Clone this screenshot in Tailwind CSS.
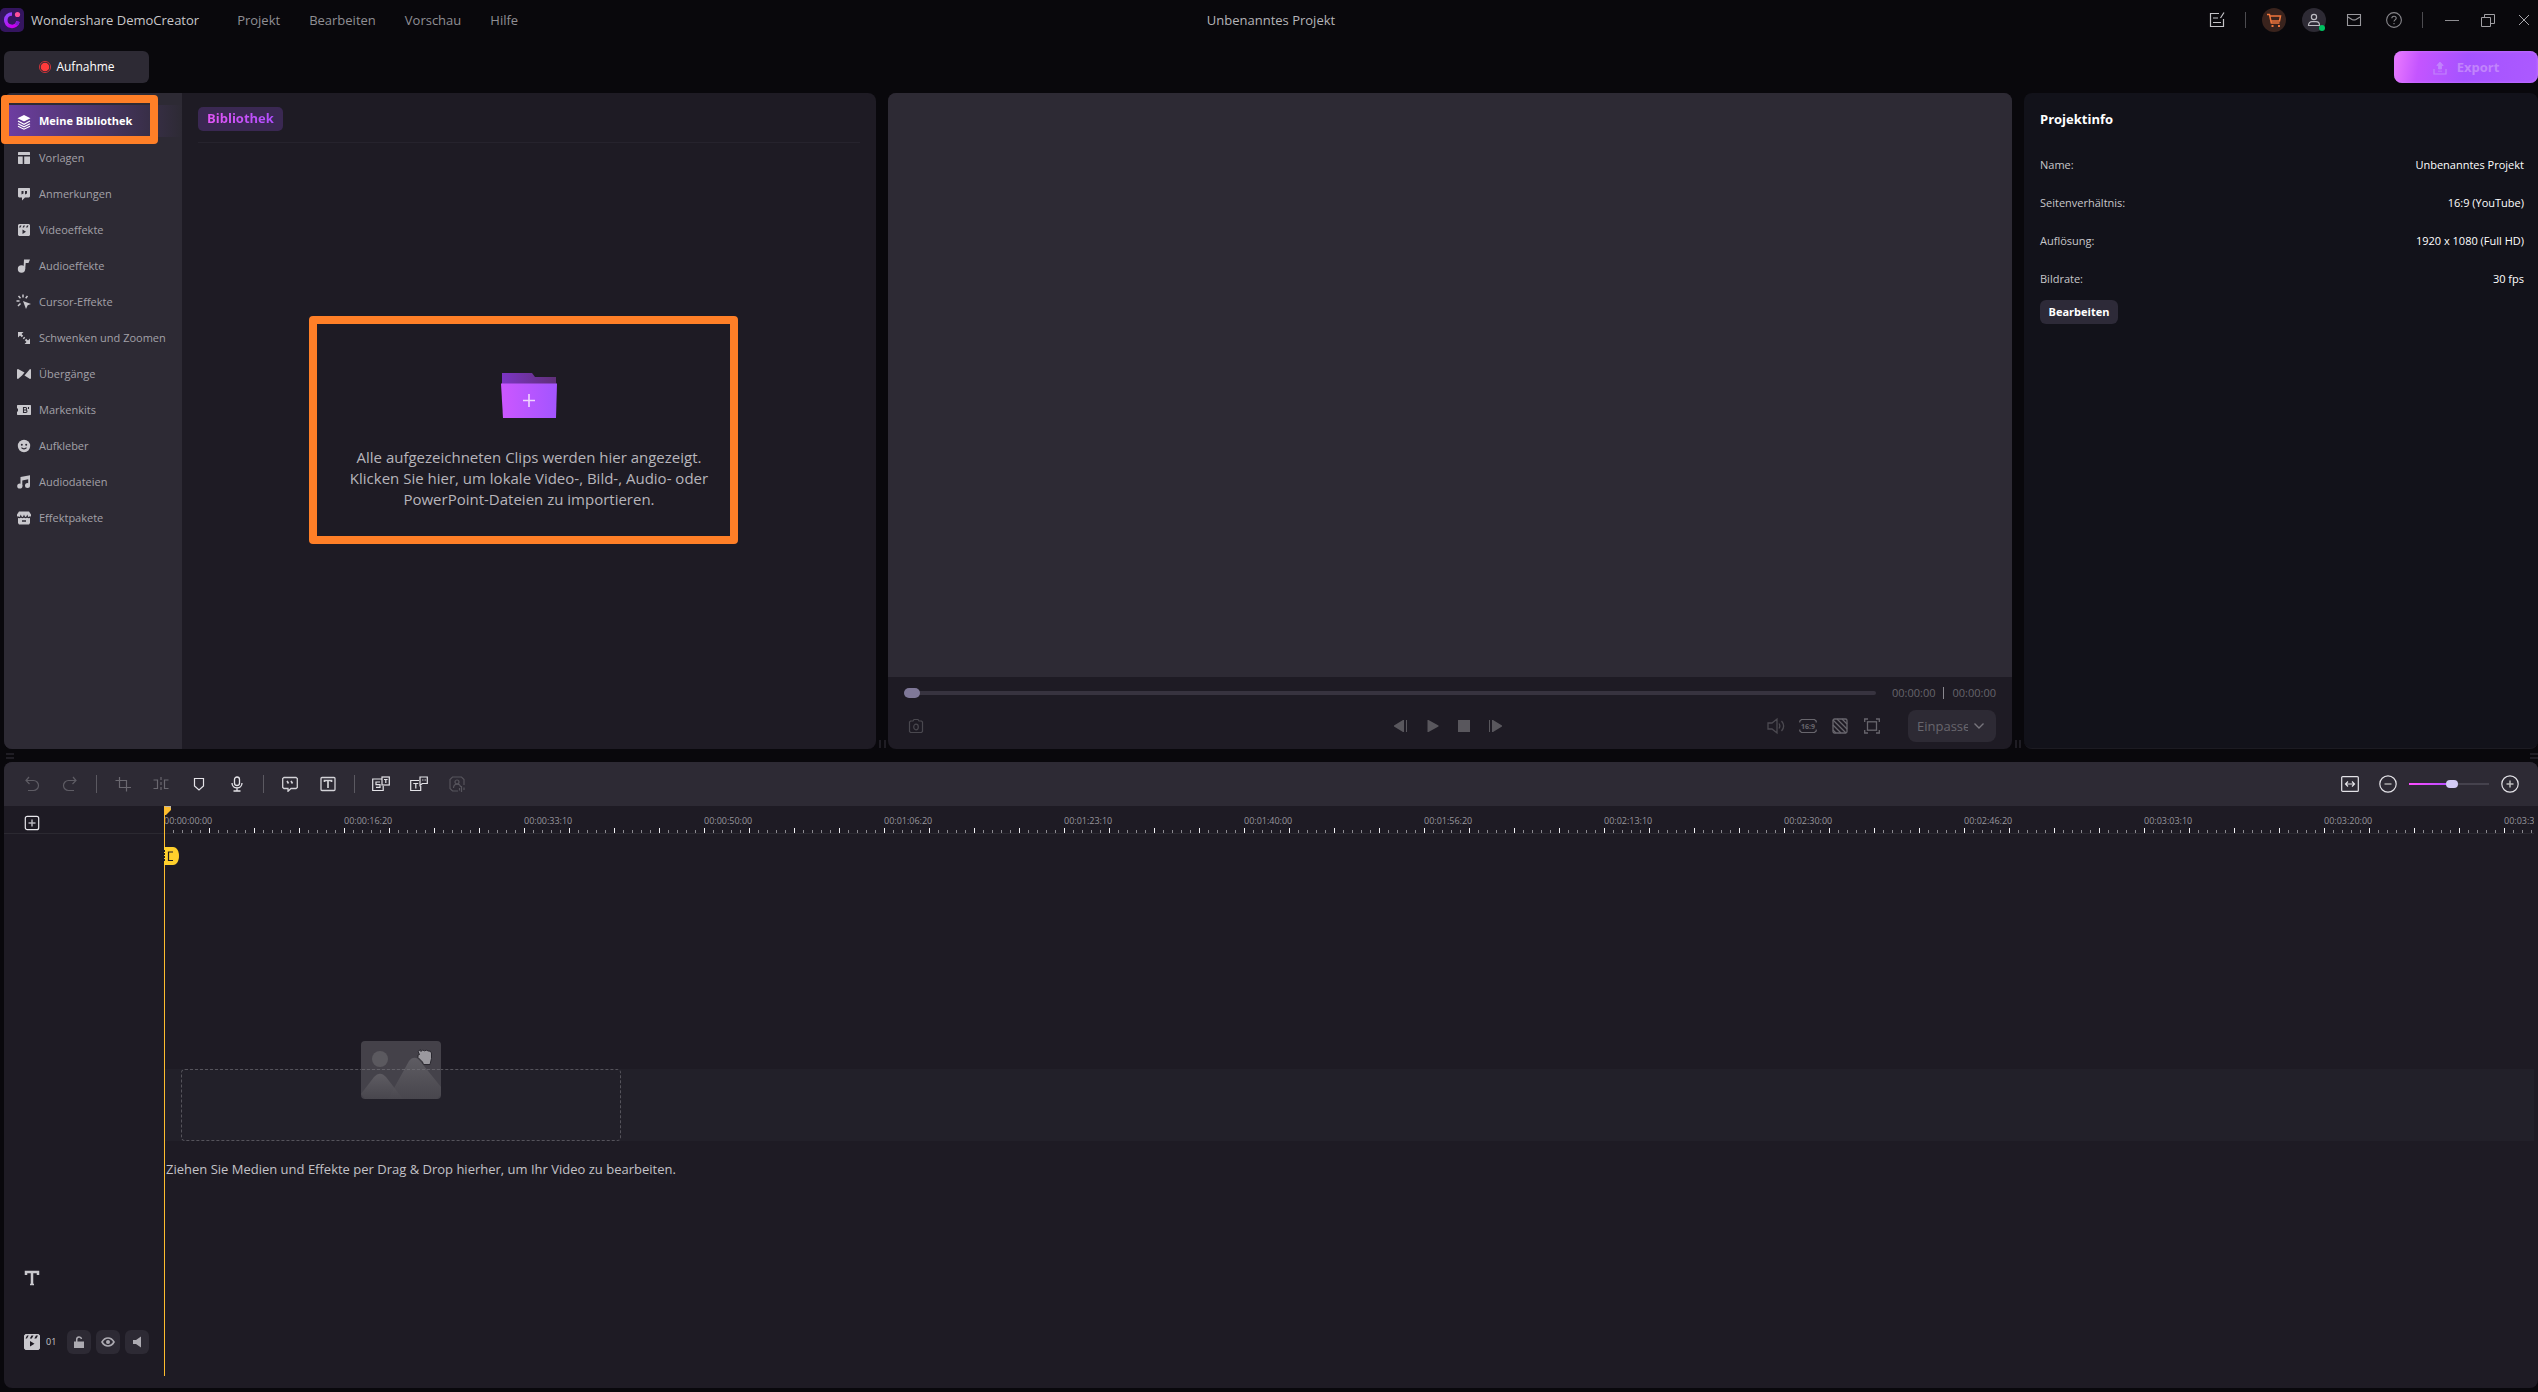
<!DOCTYPE html>
<html lang="de">
<head>
<meta charset="utf-8">
<title>Wondershare DemoCreator</title>
<script src="https://cdn.jsdelivr.net/npm/@tailwindcss/browser@4"></script>
</head>
<body class="flex h-screen min-h-[900px] flex-col overflow-hidden bg-[#09080c] font-['Open_Sans','Noto_Sans',sans-serif] text-[#c8c7ca]">

<!-- Title bar -->
<header class="grid h-10 shrink-0 grid-cols-[1fr_auto_1fr] items-center">
  <div class="flex items-center">
    <svg class="h-6 w-6 shrink-0" viewBox="0 0 24 24">
      <defs><linearGradient id="lg" x1="0" y1="0" x2="0.6" y2="1"><stop offset="0" stop-color="#8a4dff"/><stop offset="1" stop-color="#c800f0"/></linearGradient></defs>
      <rect width="24" height="24" rx="5" fill="#34155f"/>
      <path d="M12 6A6.200 6.200 0 1 0 18 13.500" fill="none" stroke="url(#lg)" stroke-width="3.600"/>
      <path d="M18 13.500L16.500 17" stroke="#7a1fd0" stroke-width="3"/>
      <circle cx="17.500" cy="6.500" r="2.600" fill="#ff4f9a"/>
    </svg>
    <span class="ml-[7px] pt-0.5 text-[13px]">Wondershare DemoCreator</span>
    <nav class="ml-[38px] flex gap-[29px] pt-px text-[13px] text-[#908f94]">
      <a href="#">Projekt</a><a href="#">Bearbeiten</a><a href="#">Vorschau</a><a href="#">Hilfe</a>
    </nav>
  </div>
  <h1 class="pt-0.5 pl-1 text-[13px] text-[#b5b4b8]">Unbenanntes Projekt</h1>
  <div class="flex items-center justify-end">
    <button class="flex w-[38px] justify-center" aria-label="Notizen"><svg class="h-4 w-4" viewBox="0 0 16 16" fill="none" stroke="#c4c3c7" stroke-width="1.200"><path d="M10 1.500H1.500v13h13V7M4 6h5M4 10.500h8M15 .5L11.500 6"/></svg></button>
    <span class="flex w-[18px] justify-center"><i class="h-4 w-px bg-[#4c4b50]"></i></span>
    <button class="flex w-10 justify-center" aria-label="Shop"><svg class="h-6 w-6" viewBox="0 0 24 24" fill="none" stroke="#f0763c" stroke-width="1.500"><circle cx="12" cy="12" r="12" fill="#3a231d" stroke="none"/><path d="M5 6.500h2.500l1.800 8.500h8.200M8 8h10.500l-1 5H9"/><path d="M9.500 18h2M16 18h2" stroke-width="2"/></svg></button>
    <button class="flex w-10 justify-center" aria-label="Konto"><svg class="h-6 w-6" viewBox="0 0 24 24" fill="none" stroke="#bdbcc2" stroke-width="1.200"><circle cx="12" cy="12" r="12" fill="#2d2a34" stroke="none"/><circle cx="12" cy="9" r="2.600"/><path d="M6.500 17.500c0-2.500 1.500-3.800 3.500-3.800h4c2 0 3.500 1.300 3.500 3.800z"/><circle cx="20" cy="20" r="3" fill="#00c261" stroke="none"/></svg></button>
    <button class="flex w-10 justify-center" aria-label="Nachrichten"><svg class="h-4 w-4" viewBox="0 0 16 16" fill="none" stroke="#99989d" stroke-width="1.100"><path d="M1.500 2.500h13v11h-13zM2 5l4 2.500c1.300.6 2.700.6 4 0L14 5"/></svg></button>
    <button class="flex w-10 justify-center" aria-label="Hilfe"><svg class="h-4 w-4" viewBox="0 0 16 16" fill="none" stroke="#88878c" stroke-width="1.100"><circle cx="8" cy="8" r="7.400"/><path d="M5.800 6.300c0-1.300 1-2.100 2.200-2.100s2.200.8 2.200 2c0 1.600-2.200 1.700-2.200 3.300M8 11v1.200"/></svg></button>
    <span class="mr-2 flex w-4 justify-center"><i class="h-4 w-px bg-[#4c4b50]"></i></span>
    <button class="flex w-7 justify-center" aria-label="Minimieren"><svg class="h-4 w-4" viewBox="0 0 16 16"><path d="M1 8.500h14" stroke="#8e8d92"/></svg></button>
    <button class="flex w-11 justify-center" aria-label="Wiederherstellen"><svg class="h-4 w-4" viewBox="0 0 16 16" fill="none" stroke="#a09fa4"><path d="M1.500 5.500h9v9h-9zM4.500 5.500v-3h10v9h-4"/></svg></button>
    <button class="flex w-7 justify-center" aria-label="Schließen"><svg class="h-3 w-3" viewBox="0 0 12 12" stroke="#a8a7ac"><path d="M1 1l10 10M11 1L1 11"/></svg></button>
  </div>
</header>

<div class="flex h-[53px] shrink-0 items-center justify-between pl-1">
  <button class="flex h-8 w-[145px] items-center justify-center gap-1 rounded-md bg-[#2d2a34] text-[12px] text-white">
    <svg class="h-3.5 w-3.5" viewBox="0 0 14 14"><circle cx="7" cy="7" r="5.600" fill="none" stroke="#c2333a"/><circle cx="7" cy="7" r="4.300" fill="#ff3b3b"/></svg>Aufnahme</button>
  <button class="flex h-8 w-36 items-center justify-center gap-2.5 rounded-lg bg-[linear-gradient(100deg,#ec7cff_0%,#c455ff_18%,#a553ff_50%,#ac5aff_100%)] pt-0.5 text-[13px] font-bold text-[#c184fb] shadow-[inset_0_0_3px_#cf7cff]">
    <svg class="h-3.5 w-3.5" viewBox="0 0 14 14" fill="none" stroke="#c184fb" stroke-width="1.200"><path d="M1 8v5h12V8"/><path d="M7 1L3.800 4.500h1.700V8h3V4.500h1.700zM5 10.200h4" fill="#c184fb" stroke-width=".8"/></svg>Export</button>
</div>

<!-- Upper workspace -->
<main class="flex min-h-0 flex-[656_1_0%]">
  <section class="ml-1 flex min-w-0 flex-[872_1_0%] rounded-lg bg-[#1e1b24]">
    <aside class="w-[178px] shrink-0 rounded-l-lg bg-[#2d2a34] pt-3">
      <ul class="flex flex-col gap-1 text-[11px] text-[#a3a1a8]">
        <li class="relative h-8 bg-linear-to-r from-[#6f3da4] to-[#2d2a34] font-bold text-white">
          <a href="#" class="flex h-8 items-center gap-[7px] pt-px pl-3"><svg class="h-4 w-4 shrink-0" viewBox="0 0 16 16" fill="#fff"><path d="M8 1l6.500 3.300L8 7.600 1.500 4.300z"/><path d="M2 7l6 3.200L14 7M2 9.700l6 3.200 6-3.200M2 12.200l6 3 6-3" fill="none" stroke="#fff" stroke-width="1.200"/></svg>Meine Bibliothek</a>
          <span class="pointer-events-none absolute -left-[3px] -top-[10px] h-[49px] w-[157px] rounded border-8 border-[#ff7f27]"></span>
        </li>
        <li><a href="#" class="flex h-8 items-center gap-[7px] pt-0.5 pl-3"><svg class="h-4 w-4 shrink-0" viewBox="0 0 16 16" fill="#c9c8cd"><path d="M2.500 2h11l.5.500V5H2V2.500zM2 6.500h4.700V14H2.500l-.5-.5zM8.200 6.500H14v7l-.5.500H8.200z"/></svg>Vorlagen</a></li>
        <li><a href="#" class="flex h-8 items-center gap-[7px] pt-0.5 pl-3"><svg class="h-4 w-4 shrink-0" viewBox="0 0 16 16" fill="#c9c8cd"><path fill-rule="evenodd" d="M2.500 2h11l.5.500v8l-1 1H9l-3 3v-3H3l-1-1v-8zM5.500 5v3.500l2-1V5zM9 5v3.500l2-1V5z"/></svg>Anmerkungen</a></li>
        <li><a href="#" class="flex h-8 items-center gap-[7px] pt-0.5 pl-3"><svg class="h-4 w-4 shrink-0" viewBox="0 0 16 16" fill="#c9c8cd"><path fill-rule="evenodd" d="M3 2h10l1 1v10l-1 1H3l-1-1V3zM6.500 7.500v4.500L10 9.700zM4 3.500L3 5.500h1.500l1-2zM7.500 3.500l-1 2H8l1-2zM11 3.500l-1 2h1.500l1-2z"/></svg>Videoeffekte</a></li>
        <li><a href="#" class="flex h-8 items-center gap-[7px] pt-0.5 pl-3"><svg class="h-4 w-4 shrink-0" viewBox="0 0 16 16" fill="#c9c8cd"><circle cx="5.500" cy="11" r="3.700"/><path d="M8 1.500h6L12.500 5H9.700L9.200 11H7.500z"/></svg>Audioeffekte</a></li>
        <li><a href="#" class="flex h-8 items-center gap-[7px] pt-0.5 pl-3"><svg class="h-4 w-4 shrink-0" viewBox="0 0 16 16" fill="#c9c8cd"><path d="M7 7l8 3-3.300 1.300L10 15z"/><path d="M7 .5v3M11.500 2L9.700 4.300M2.500 2l2 2.300M.5 7h3M4.500 9.500L2 12" fill="none" stroke="#c9c8cd" stroke-width="1.500"/></svg>Cursor-Effekte</a></li>
        <li><a href="#" class="flex h-8 items-center gap-[7px] pt-0.5 pl-3"><svg class="h-4 w-4 shrink-0" viewBox="0 0 16 16" fill="#c9c8cd"><path d="M2 2h5.500L2 7.500zM14 14H8.500L14 8.500z"/><path d="M4 4l2.500 2.500M7.500 7.500l1 1M9.500 9.500L12 12" stroke="#c9c8cd" stroke-width="2"/></svg>Schwenken und Zoomen</a></li>
        <li><a href="#" class="flex h-8 items-center gap-[7px] pt-0.5 pl-3"><svg class="h-4 w-4 shrink-0" viewBox="0 0 16 16" fill="#c9c8cd"><path d="M1 3.500L2 3l6.500 3.500L6 9.500 2 13l-1-.5zM15 3.500v9l-1 .5-5.500-3.500L14 3z"/></svg>Übergänge</a></li>
        <li><a href="#" class="flex h-8 items-center gap-[7px] pt-0.5 pl-3"><svg class="h-4 w-4 shrink-0" viewBox="0 0 16 16"><path d="M1.500 3h13l.5.500v9l-.5.500h-13l-.5-.5V10l1-1V7L1 6V3.500z" fill="#c9c8cd"/><path d="M7.500 5.500v5H9.800c1.600 0 1.600-2.500 0-2.500H7.500h2c1.500 0 1.500-2.500 0-2.500zM12.500 5v2" fill="none" stroke="#2d2a34" stroke-width="1.100"/></svg>Markenkits</a></li>
        <li><a href="#" class="flex h-8 items-center gap-[7px] pt-0.5 pl-3"><svg class="h-4 w-4 shrink-0" viewBox="0 0 16 16"><circle cx="8" cy="8" r="6.200" fill="#c9c8cd"/><circle cx="5.800" cy="6.800" r="1" fill="#2d2a34"/><circle cx="10.200" cy="6.800" r="1" fill="#2d2a34"/><path d="M5.500 9.700c1.300 1.500 3.700 1.500 5 0" fill="none" stroke="#2d2a34" stroke-width="1.200"/></svg>Aufkleber</a></li>
        <li><a href="#" class="flex h-8 items-center gap-[7px] pt-0.5 pl-3"><svg class="h-4 w-4 shrink-0" viewBox="0 0 16 16" fill="#c9c8cd"><path d="M4.500 3L14 1.300v10.200h-1.800V5.300L6.300 6.400v6H4.500z"/><circle cx="3.800" cy="12" r="2.600"/><circle cx="11.500" cy="11.500" r="2.500"/></svg>Audiodateien</a></li>
        <li><a href="#" class="flex h-8 items-center gap-[7px] pt-0.5 pl-3"><svg class="h-4 w-4 shrink-0" viewBox="0 0 16 16"><path d="M3 1.500h10l2 3v2l-1 1V13l-1 1.500H3L2 13V7.500l-1-1v-2z" fill="#c9c8cd"/><path d="M1.500 6.500c1.200 1.500 2.700 1.500 3.300-.3.800 1.800 2.400 1.800 3.200 0 .8 1.800 2.400 1.800 3.200 0 .6 1.800 2.100 1.800 3.300.3M6 11h4" fill="none" stroke="#2d2a34" stroke-width="1.300"/></svg>Effektpakete</a></li>
      </ul>
    </aside>
    <div class="flex min-w-0 flex-1 flex-col px-4 pt-3">
      <div class="border-b border-[#26232d] pb-[11px]">
        <button class="h-6 rounded-[5px] bg-[#3a2852] px-[9px] text-[13px] font-bold"><span class="bg-linear-to-r from-[#e255f5] to-[#b04dff] bg-clip-text text-transparent">Bibliothek</span></button>
      </div>
      <div class="flex flex-1 items-center justify-center pb-2">
        <button class="relative flex flex-col items-center text-[15px] leading-[21px] text-[#b7b5bb]">
          <svg class="mb-7 h-[46px] w-14" viewBox="0 0 56 46">
            <defs><linearGradient id="f1"><stop offset="0" stop-color="#cc57ff"/><stop offset="1" stop-color="#a355ff"/></linearGradient><linearGradient id="f2"><stop offset="0" stop-color="#7c35c4"/><stop offset="1" stop-color="#5f3078"/></linearGradient></defs>
            <path d="M1 0h30l3 4h21v12H1z" fill="url(#f2)"/><path d="M0 10.500h56l-1 34.500H2z" fill="url(#f1)"/><path d="M28 21v13M22 27.500h12" stroke="#f0d4ff" stroke-width="1.600"/>
          </svg>
          <span class="whitespace-nowrap">Alle aufgezeichneten Clips werden hier angezeigt.<br>Klicken Sie hier, um lokale Video-, Bild-, Audio- oder<br>PowerPoint-Dateien zu importieren.</span>
          <span class="pointer-events-none absolute -top-[57px] -bottom-[34px] left-1/2 -ml-[220px] w-[429px] rounded border-8 border-[#ff7f27]"></span>
        </button>
      </div>
    </div>
  </section>

  <div class="flex w-3 shrink-0 items-end justify-center gap-[3px] pb-px"><i class="h-2 w-0.5 bg-[#1f1d24]"></i><i class="h-2 w-0.5 bg-[#1f1d24]"></i></div>

  <section class="flex min-w-0 flex-[1124_1_0%] flex-col rounded-lg bg-[#1e1b24]">
    <div class="flex-1 rounded-t-lg bg-[#2d2a34]"></div>
    <div class="flex h-8 items-center px-4 text-[11px] text-[#66646b]">
      <input type="range" aria-label="Position" min="0" max="100" value="0" class="h-1 min-w-0 flex-1 appearance-none rounded-full bg-[#37333f] [&::-webkit-slider-thumb]:h-2.5 [&::-webkit-slider-thumb]:w-4 [&::-webkit-slider-thumb]:appearance-none [&::-webkit-slider-thumb]:rounded-full [&::-webkit-slider-thumb]:bg-[#7f7898]">
      <span class="ml-4">00:00:00</span><i class="mx-2 h-3 w-px bg-[#8a888f]"></i><span>00:00:00</span>
    </div>
    <div class="mt-px mb-[7px] grid h-8 grid-cols-3 items-center px-4">
      <button class="flex w-6 justify-center" aria-label="Schnappschuss"><svg class="h-4 w-4" viewBox="0 0 16 16" fill="none" stroke="#4a484f" stroke-width="1.200"><path d="M2.500 3H5l1-1.500h4L11 3h2.500l1 1v9.500l-1 1h-11l-1-1V4z"/><ellipse cx="8" cy="9" rx="2.300" ry="2.800"/></svg></button>
      <div class="flex justify-center pr-1">
        <button class="flex w-8 justify-center" aria-label="Vorheriges Bild"><svg class="h-4 w-4" viewBox="0 0 16 16" fill="#59575d"><path d="M11 2v12h-1L1 8.500v-1L10 2zM13 2h1v12h-1z"/></svg></button>
        <button class="flex w-8 justify-center" aria-label="Wiedergabe"><svg class="h-4 w-4" viewBox="0 0 16 16" fill="#59575d"><path d="M2.500 2h1L13.500 7.500v1L3.500 14h-1z"/></svg></button>
        <button class="flex w-[30px] justify-center" aria-label="Stopp"><svg class="h-4 w-4" viewBox="0 0 16 16" fill="#59575d"><path d="M2 2h12v12H2z"/></svg></button>
        <button class="flex w-8 justify-center" aria-label="Nächstes Bild"><svg class="h-4 w-4" viewBox="0 0 16 16" fill="#59575d"><path d="M5 2v12h1l9-5.500v-1L6 2zM2 2h1v12H2z"/></svg></button>
      </div>
      <div class="flex items-center justify-end">
        <button class="flex w-8 justify-center" aria-label="Lautstärke"><svg class="h-[18px] w-[18px]" viewBox="0 0 18 18" fill="none" stroke="#4c4a51" stroke-width="1.300"><path d="M1 6h4l5-4v14l-5-4H1zM12 6.500c1 1.500 1 3.500 0 5M14.500 4c2.600 3 2.600 7 0 10"/></svg></button>
        <button class="flex w-8 justify-center" aria-label="Seitenverhältnis"><svg class="h-[18px] w-[18px]" viewBox="0 0 18 18" fill="none" stroke="#68666d" stroke-width="1.200"><path d="M.8 5.500V4L2.500 2.500h13L17.200 4v1.500M.8 12.500V14l1.700 1.500h13l1.700-1.500v-1.500"/><text x="9" y="11.500" text-anchor="middle" font-size="7" font-weight="700" fill="#68666d" stroke="none">16:9</text></svg></button>
        <button class="flex w-8 justify-center" aria-label="Hintergrund"><svg class="h-4 w-4" viewBox="0 0 16 16" fill="none" stroke="#68666d" stroke-width="1.300"><rect x="1" y="1" width="14" height="14" rx="1.500"/><path d="M1 2l13 13M5 1l10 10M10 1l5 5M1 7l8 8M1 12l3 3"/></svg></button>
        <button class="flex w-8 justify-center" aria-label="Vollbild"><svg class="h-4 w-4" viewBox="0 0 16 16" fill="none" stroke="#68666d" stroke-width="1.300"><path d="M.7 4V1H4M12 1h3.300v3M.7 12v3H4M12 15h3.300v-3"/><rect x="3.500" y="3.800" width="9" height="8.400"/></svg></button>
        <div class="relative ml-5">
          <select aria-label="Zoomstufe" class="h-8 w-[88px] appearance-none rounded-lg bg-[#2d2a34] pt-0.5 pl-[9px] pr-[28px] text-[13px] text-[#68666d]"><option>Einpassen</option></select>
          <svg class="pointer-events-none absolute top-3 right-3 h-2 w-2.5" viewBox="0 0 10 8" fill="none" stroke="#77757c" stroke-width="1.400"><path d="M.5 1.500L5 6l4.500-4.500"/></svg>
        </div>
      </div>
    </div>
  </section>

  <div class="flex w-3 shrink-0 items-end justify-center gap-0.5 pb-px"><i class="h-2 w-0.5 bg-[#1f1d24]"></i><i class="h-2 w-0.5 bg-[#1f1d24]"></i></div>

  <section class="min-w-0 flex-[514_1_0%] rounded-lg border-b border-[#1c1b22] bg-[#12121a] text-[11px]">
    <div class="pt-4 pr-3.5 pl-4">
      <h2 class="h-5 text-[13px] leading-5 font-bold text-white">Projektinfo</h2>
      <dl class="mt-[17px] grid grid-cols-[auto_1fr]">
        <dt class="h-[38px] leading-[38px]">Name:</dt><dd class="text-right leading-[38px] text-white">Unbenanntes Projekt</dd>
        <dt class="h-[38px] leading-[38px]">Seitenverhältnis:</dt><dd class="text-right leading-[38px] text-white">16:9 (YouTube)</dd>
        <dt class="h-[38px] leading-[38px]">Auflösung:</dt><dd class="text-right leading-[38px] text-white">1920 x 1080 (Full HD)</dd>
        <dt class="h-[38px] leading-[38px]">Bildrate:</dt><dd class="text-right leading-[38px] text-white">30 fps</dd>
      </dl>
      <button class="mt-0.5 h-6 w-[78px] rounded-md bg-[#2d2a38] pt-px font-bold text-white">Bearbeiten</button>
    </div>
  </section>
</main>

<div class="flex h-[13px] shrink-0 items-center justify-between pl-1.5">
  <span class="flex flex-col gap-0.5"><i class="h-0.5 w-2 bg-[#1f1d24]"></i><i class="h-0.5 w-2 bg-[#1f1d24]"></i></span>
  <span class="flex flex-col gap-0.5"><i class="h-0.5 w-2 bg-[#1f1d24]"></i><i class="h-0.5 w-2 bg-[#1f1d24]"></i></span>
</div>

<!-- Timeline -->
<section class="mb-1 ml-1 flex min-h-0 flex-[626_1_0%] flex-col rounded-lg bg-[#1e1b24]">
  <div class="flex h-11 shrink-0 items-center justify-between rounded-t-lg bg-[#2d2a34] px-[9px]">
    <div class="flex items-center">
      <button class="flex w-[38px] justify-center" aria-label="Rückgängig"><svg class="h-4 w-4" viewBox="0 0 16 16" fill="none" stroke="#5e5c64" stroke-width="1.200"><path d="M5 1L2 4.500 5.500 8M2 4.500h7.500a5 5 0 0 1 0 10H4"/></svg></button>
      <button class="flex w-[38px] justify-center" aria-label="Wiederholen"><svg class="h-4 w-4" viewBox="0 0 16 16" fill="none" stroke="#5e5c64" stroke-width="1.200"><path d="M11 1l3 3.500L10.500 8M14 4.500H6.500a5 5 0 0 0 0 10H12"/></svg></button>
      <span class="flex w-[15px] justify-center"><i class="h-[18px] w-px bg-[#5b5961]"></i></span>
      <button class="flex w-[38px] justify-center" aria-label="Zuschneiden"><svg class="h-4 w-4" viewBox="0 0 16 16" fill="none" stroke="#6a6870" stroke-width="1.200"><path d="M4.500 1v10.500H16M.5 4.500h11V15.500"/></svg></button>
      <button class="flex w-[38px] justify-center" aria-label="Teilen"><svg class="h-4 w-4" viewBox="0 0 16 16" fill="none" stroke="#6a6870" stroke-width="1.200"><path d="M.5 4h4v8.500h-4M15.500 4h-4v8.500h4"/><path d="M8 1v14" stroke-dasharray="3 2"/></svg></button>
      <button class="flex w-[38px] justify-center" aria-label="Marker"><svg class="h-4 w-4" viewBox="0 0 16 16" fill="none" stroke="#e4e3e8" stroke-width="1.200"><path d="M3.500 2.500h9V10L8 14 3.500 10z"/></svg></button>
      <button class="flex w-[38px] justify-center" aria-label="Sprachaufnahme"><svg class="h-4 w-4" viewBox="0 0 16 16" fill="none" stroke="#e4e3e8" stroke-width="1.300"><rect x="5.500" y="1" width="5" height="8.500" rx="2.500"/><path d="M3 7c0 6.500 10 6.500 10 0M8 12v3M4.500 15h7"/></svg></button>
      <span class="flex w-[15px] justify-center"><i class="h-[18px] w-px bg-[#5b5961]"></i></span>
      <button class="flex w-[38px] justify-center" aria-label="Anmerkung"><svg class="h-4 w-4" viewBox="0 0 16 16" fill="none" stroke="#d4d3d8" stroke-width="1.300"><path d="M2 1.500h12l1.300 1v9l-1.300 1H9l-3 2.800v-2.800H2l-1.300-1v-9z"/><path d="M5 5l1.500 2.500M9 5l1.500 2.500" stroke-width="1.600"/></svg></button>
      <button class="flex w-[38px] justify-center" aria-label="Text"><svg class="h-4 w-4" viewBox="0 0 16 16" fill="none" stroke="#d4d3d8" stroke-width="1.300"><rect x="1" y="1.500" width="14" height="13" rx="1"/><path d="M4.500 6V4.500h7V6M8 4.500v7.500" stroke-width="1.700"/></svg></button>
      <span class="flex w-[15px] justify-center"><i class="h-[18px] w-px bg-[#5b5961]"></i></span>
      <button class="flex w-[38px] justify-center" aria-label="Sprache zu Text"><svg class="h-[18px] w-[18px]" viewBox="0 0 18 18" fill="none" stroke="#e4e3e8" stroke-width="1.200"><path d="M10 4H.7v11.500h10.500V11"/><rect x="10" y="2" width="7.300" height="8"/><path d="M12 4.500h3.600M13.800 4.500V8M8 7H4v2.700h4v2.700H4"/></svg></button>
      <button class="flex w-[38px] justify-center" aria-label="Text zu Sprache"><svg class="h-[18px] w-[18px]" viewBox="0 0 18 18" fill="none" stroke="#e4e3e8" stroke-width="1.200"><path d="M9 5.500H.7v10h10V11"/><path d="M10 2h7.300v6.500h-5L10 10.500z"/><path d="M3.300 8.500h5M5.800 8.500v5M12 5h.8M13.600 5h.8M15.200 5h.8"/></svg></button>
      <button class="flex w-[38px] justify-center" aria-label="KI-Avatar"><svg class="h-4 w-4" viewBox="0 0 16 16" fill="none" stroke="#56545c" stroke-width="1.200"><path d="M9 15H3.500L1 12.500v-9L3.500 1h9L15 3.500V9M12.500 10v6M10.500 12v2.500M15 11.500V14"/><circle cx="8" cy="6" r="2"/><path d="M4.500 12c0-5 7-5 7-1"/></svg></button>
    </div>
    <div class="flex items-center">
      <button class="flex w-[38px] justify-center" aria-label="An Fenster anpassen"><svg class="h-[18px] w-[18px]" viewBox="0 0 18 18" fill="none" stroke="#e4e3e8" stroke-width="1.200"><rect x=".7" y="1.600" width="16.600" height="14.800" rx="1"/><path d="M7 6.500L4.500 9 7 11.500M11 6.500L13.500 9 11 11.500M4.500 9h9"/></svg></button>
      <button class="flex w-[38px] justify-center" aria-label="Verkleinern"><svg class="h-[18px] w-[18px]" viewBox="0 0 18 18" fill="none" stroke="#e4e3e8" stroke-width="1.200"><circle cx="9" cy="9" r="8.200"/><path d="M5.500 9h7" stroke-width="1.500" stroke="#aaa"/></svg></button>
      <input type="range" aria-label="Zeitachsen-Zoom" min="0" max="100" value="54" class="mx-0.5 h-0.5 w-20 appearance-none bg-[linear-gradient(90deg,#ff4dff_0,#b44dff_40px,#45424d_40px)] [&::-webkit-slider-thumb]:h-2 [&::-webkit-slider-thumb]:w-3 [&::-webkit-slider-thumb]:appearance-none [&::-webkit-slider-thumb]:rounded-full [&::-webkit-slider-thumb]:bg-[#d3cbf5]">
      <button class="flex w-[38px] justify-center" aria-label="Vergrößern"><svg class="h-[18px] w-[18px]" viewBox="0 0 18 18" fill="none" stroke="#e4e3e8" stroke-width="1.200"><circle cx="9" cy="9" r="8.200"/><path d="M5.500 9h7M9 5.500v7" stroke-width="1.500" stroke="#bbb"/></svg></button>
    </div>
  </div>

  <div class="relative flex min-h-0 flex-1">
    <!-- Track headers -->
    <div class="flex w-40 shrink-0 flex-col">
      <div class="flex h-7 items-center border-b border-[#2b2931] pt-1.5 pl-5">
        <button aria-label="Spur hinzufügen"><svg class="block h-4 w-4" viewBox="0 0 16 16" fill="none" stroke="#e8e7ec" stroke-width="1.200"><rect x="1.300" y="1.300" width="13.400" height="13.400" rx="2"/><path d="M8 4.500v7M4.500 8h7" stroke="#b5b4ba" stroke-width="1.500"/></svg></button>
      </div>
      <div class="flex flex-1 flex-col justify-end gap-11 pb-[34px] pl-5">
        <svg class="h-4 w-4" viewBox="0 0 16 16" fill="none" stroke="#c9c8cd"><path d="M2 5V2h12v3M8 2v12" stroke-width="2.500"/><path d="M6 14.500h4" stroke-width="1.500"/></svg>
        <div class="flex items-center">
          <svg class="h-4 w-4" viewBox="0 0 16 16" fill="#c9c8cd"><path fill-rule="evenodd" d="M1.500 0h13L16 1.500v13L14.500 16h-13L0 14.500v-13zM6 7v5.500l4.500-2.700zM3 1.500L1.500 4.500H3l1.700-3zM7.500 1.500l-1.700 3h2l1.700-3zM12 1.500l-1.700 3h2l1.700-3z"/></svg>
          <span class="ml-1.5 w-[21px] text-[9px]">01</span>
          <div class="flex gap-[5px]">
            <button class="flex h-6 w-6 items-center justify-center rounded-md bg-[#2d2a34]" aria-label="Sperren"><svg class="h-3 w-3" viewBox="0 0 12 12" fill="#adabb2"><path d="M1 5.500h10V12H1z"/><path d="M3.700 6V3.500C3.700.5 8 .3 8.500 3" fill="none" stroke="#adabb2" stroke-width="1.500"/></svg></button>
            <button class="flex h-6 w-6 items-center justify-center rounded-md bg-[#2d2a34]" aria-label="Sichtbarkeit"><svg class="h-3.5 w-3.5" viewBox="0 0 14 14" fill="none" stroke="#adabb2" stroke-width="1.600"><path d="M1 7c3-5.300 9-5.300 12 0-3 5.300-9 5.300-12 0z"/><circle cx="7" cy="7" r="2" fill="#adabb2" stroke="none"/></svg></button>
            <button class="flex h-6 w-6 items-center justify-center rounded-md bg-[#2d2a34]" aria-label="Stumm"><svg class="h-3 w-3" viewBox="0 0 12 12" fill="#adabb2"><path d="M2 4h3l5-3.500v11L5 8H2z"/></svg></button>
          </div>
        </div>
      </div>
    </div>

    <!-- Ruler and tracks -->
    <div class="mr-1 flex min-w-0 flex-1 flex-col">
      <div class="flex h-7 flex-col overflow-hidden border-b border-[#2b2931]">
        <div class="flex h-[22px] overflow-hidden pt-[7px] text-[9px] leading-4 text-[#98969d]">
          <span class="w-[180px] shrink-0">00:00:00:00</span><span class="w-[180px] shrink-0">00:00:16:20</span><span class="w-[180px] shrink-0">00:00:33:10</span><span class="w-[180px] shrink-0">00:00:50:00</span><span class="w-[180px] shrink-0">00:01:06:20</span><span class="w-[180px] shrink-0">00:01:23:10</span><span class="w-[180px] shrink-0">00:01:40:00</span><span class="w-[180px] shrink-0">00:01:56:20</span><span class="w-[180px] shrink-0">00:02:13:10</span><span class="w-[180px] shrink-0">00:02:30:00</span><span class="w-[180px] shrink-0">00:02:46:20</span><span class="w-[180px] shrink-0">00:03:03:10</span><span class="w-[180px] shrink-0">00:03:20:00</span><span class="w-[180px] shrink-0">00:03:36:20</span>
        </div>
        <svg class="h-[5px] w-full"><defs><pattern id="ticks" width="45" height="5" patternUnits="userSpaceOnUse"><path d="M0 0h1v5H0z" fill="#f4f3f7"/><path d="M9 2h1v3H9zM18 2h1v3h-1zM27 2h1v3h-1zM36 2h1v3h-1z" fill="#8b8990"/></pattern></defs><rect width="100%" height="5" fill="url(#ticks)"/></svg>
      </div>
      <div class="flex flex-1 flex-col justify-center">
        <svg class="relative z-10 -mb-[30px] ml-[197px] h-[58px] w-20" viewBox="0 0 80 58">
          <defs><linearGradient id="mt" x1="0" y1="0" x2="0" y2="1"><stop offset="0" stop-color="#656369"/><stop offset="1" stop-color="#49474e"/></linearGradient></defs>
          <rect width="80" height="58" rx="4" fill="#48464e" fill-opacity=".9"/>
          <circle cx="19" cy="18" r="8" fill="#5b595f"/>
          <path d="M27 58L48 20c3-4.500 8-4.500 11 0l21 26v8l-4 4z" fill="url(#mt)" fill-opacity=".8"/>
          <path d="M0 53L13 36c4-4.500 8-4.500 12 0l17 22H4z" fill="url(#mt)" fill-opacity=".8"/>
          <path d="M1 28.500h78" stroke="#76747b" stroke-dasharray="3 2" stroke-opacity=".6"/>
          <path d="M57 10.500l2.500-2 .5 2 1.500-1.500 2 .8 2-.6 1.800.8 2 .2 1.200 1.800v5.500L69 23.500h-6.500l-1-2.500-4.500-4.500v-2.500l1.500-.5z" fill="#9b999f" stroke="#2a282f"/>
        </svg>
        <div class="h-[72px] bg-[#222029] pl-[17px]"><div class="h-[72px] w-[440px] rounded-sm border border-dashed border-[#55535b]"></div></div>
        <p class="mt-4 h-6 pl-0.5 text-[13px] leading-6 text-[#c3c2c7]">Ziehen Sie Medien und Effekte per Drag &amp; Drop hierher, um Ihr Video zu bearbeiten.</p>
      </div>
    </div>

    <!-- Playhead -->
    <div class="absolute top-0 bottom-3 left-40 w-px bg-[#fdbd2e]">
      <svg class="absolute top-0 left-0 h-[9px] w-[7px]" viewBox="0 0 7 9"><path d="M0 0h7v4L2 9H0z" fill="#fdbd2e"/><path d="M1 0h6v3L6 1H1z" fill="#b9b4ad"/></svg>
      <svg class="absolute top-[41px] left-0 h-[18px] w-[15px]" viewBox="0 0 15 18"><path d="M0 0h9c8 0 8 18 0 18H0z" fill="#ffd02c"/><path d="M.5 3v12" stroke="#1e1b24" stroke-dasharray="2 1"/><path d="M9 5H4.500v8.500H9" fill="none" stroke="#1e1b24" stroke-width="1.200"/></svg>
    </div>
  </div>
</section>
</body>
</html>
